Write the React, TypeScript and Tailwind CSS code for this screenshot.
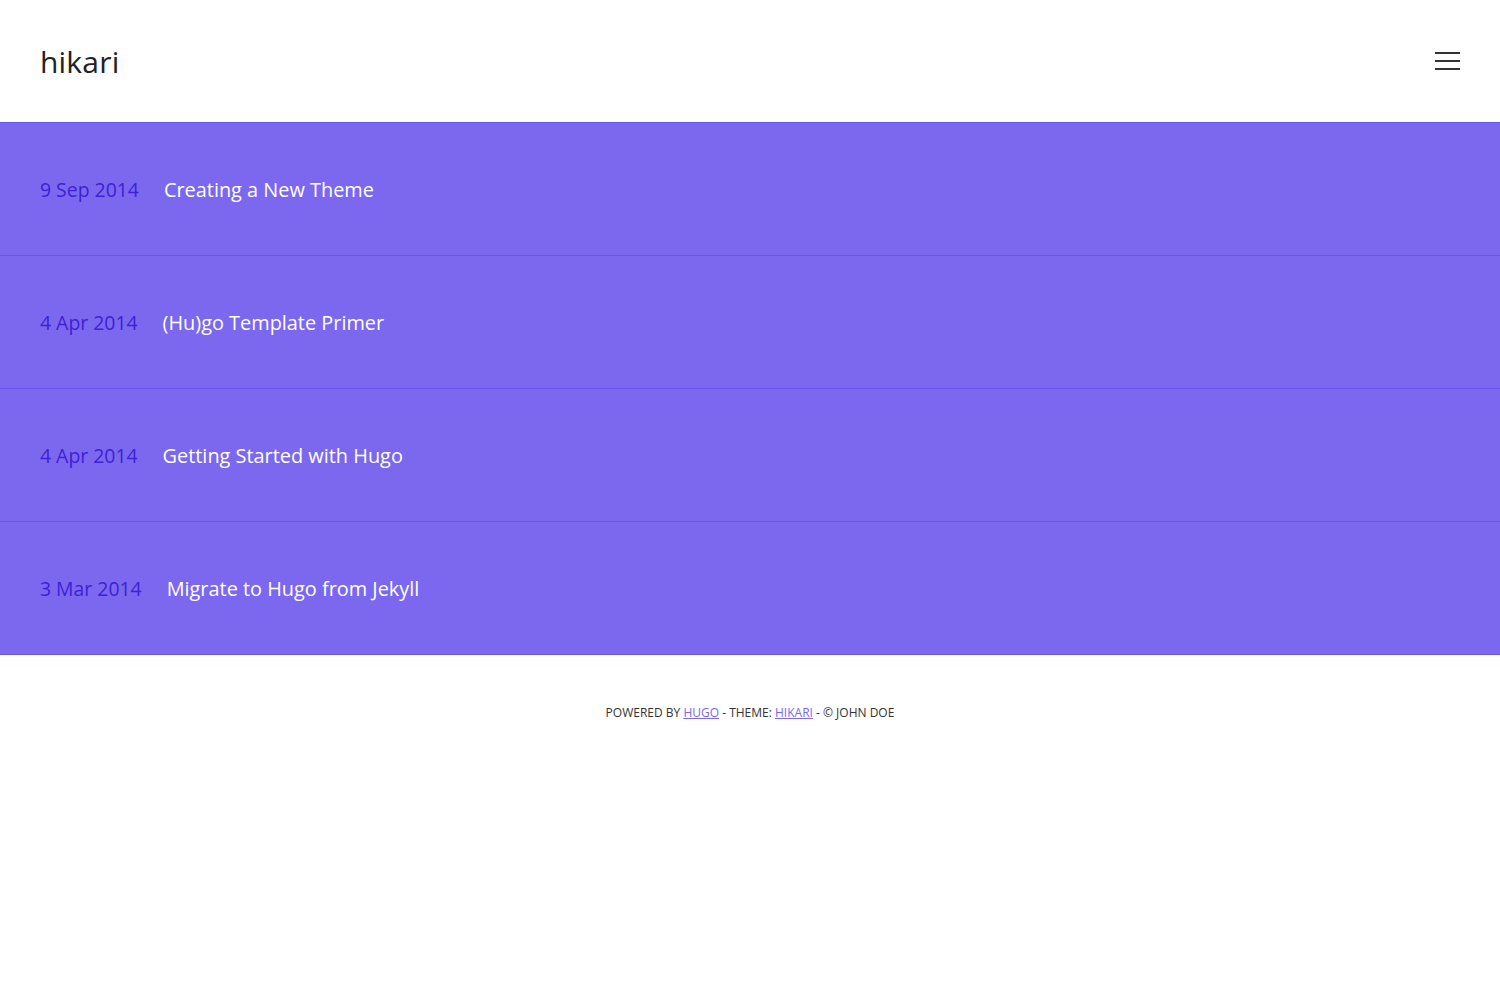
import React from "react";

const posts = [
  { date: "9 Sep 2014", title: "Creating a New Theme" },
  { date: "4 Apr 2014", title: "(Hu)go Template Primer" },
  { date: "4 Apr 2014", title: "Getting Started with Hugo" },
  { date: "3 Mar 2014", title: "Migrate to Hugo from Jekyll" },
];

export default function App() {
  return (
    <div className="min-h-screen bg-white text-[#333]" style={{ fontFamily: '"Open Sans", "Noto Sans", sans-serif' }}>
      <header className="h-[123px] flex items-center justify-between px-10 border-b border-[#6a55ea]">
        <a className="text-[30px] font-normal text-[#222] leading-none tracking-[0.2px] mt-[1px]">hikari</a>
        <button className="w-[25px] h-[18px] flex flex-col justify-between">
          <span className="block h-[2px] w-full bg-[#333]" />
          <span className="block h-[2px] w-full bg-[#333]" />
          <span className="block h-[2px] w-full bg-[#333]" />
        </button>
      </header>
      <main className="bg-[#7b68ee]">
        {posts.map((p, i) => (
          <div key={i} className="h-[133px] flex items-center px-10 pt-[2px] border-b border-[#6a55ea] text-[20px]">
            <span className="text-[#3f20d6] text-[19.4px]">{p.date}</span>
            <span className="ml-[25px] text-white text-[19.9px]">{p.title}</span>
          </div>
        ))}
      </main>
      <footer className="pt-[49px] text-center text-[12px] uppercase text-[#333]">
        Powered by <a className="underline text-[#7b68ee]">Hugo</a> - Theme: <a className="underline text-[#7b68ee]">Hikari</a> - © John Doe
      </footer>
    </div>
  );
}
